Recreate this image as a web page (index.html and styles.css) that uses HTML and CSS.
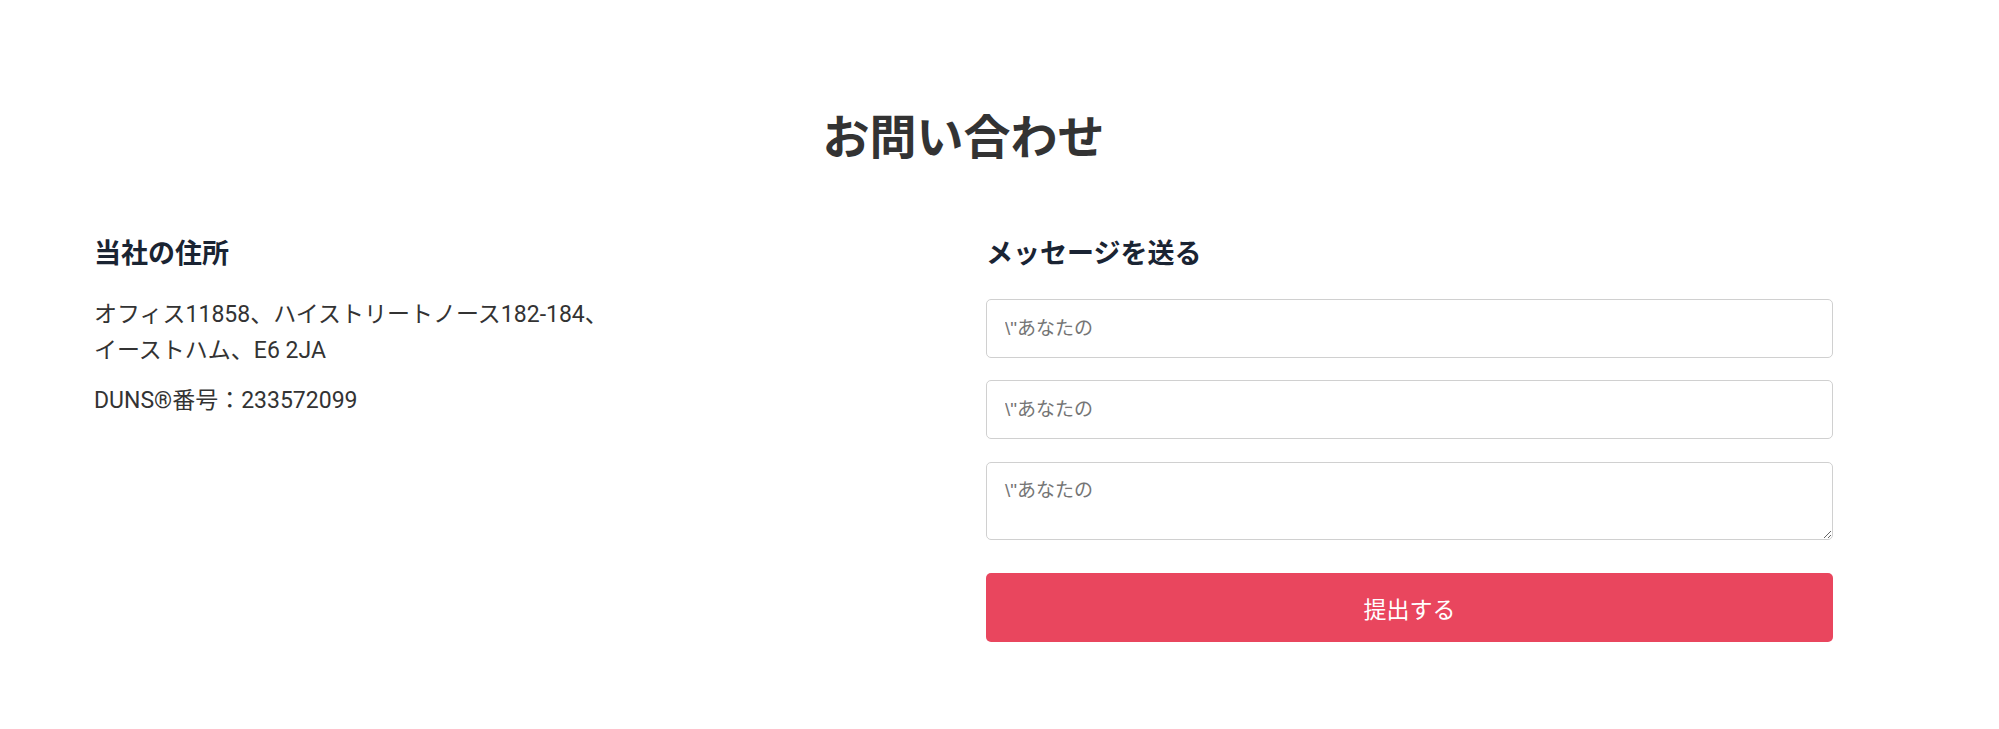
FILE: index.html
```html
<!DOCTYPE html>
<html lang="ja">
<head>
    <meta charset="UTF-8">
    <title>お問い合わせ</title>
    <link rel="stylesheet" href="styles.css">
</head>
<body>
    <section class="contact">
        <h1 class="contact-title">お問い合わせ</h1>

        <div class="contact-row">
            <!-- 住所 -->
            <div class="contact-col">
                <h3 class="col-title">当社の住所</h3>
                <p class="address">オフィス11858、ハイストリートノース182-184、<br>イーストハム、E6 2JA</p>
                <p class="duns">DUNS®番号：233572099</p>
            </div>

            <!-- フォーム -->
            <div class="contact-col">
                <h3 class="col-title">メッセージを送る</h3>
                <form class="contact-form" onsubmit="return false">
                    <input class="field" type="text" placeholder='\"あなたの'>
                    <input class="field" type="email" placeholder='\"あなたの'>
                    <textarea class="field field-area" placeholder='\"あなたの'></textarea>
                    <button class="submit-btn" type="submit">提出する</button>
                </form>
            </div>
        </div>
    </section>
</body>
</html>
```

FILE: styles.css
```css
body {
    margin: 0;
    background: #fff;
    color: #333;
    font-family: Roboto, "Noto Sans CJK JP", sans-serif;
}

.contact {
    width: 1739px;
    padding: 111px 0 0 94px;
}

.contact-title {
    margin: 0 0 73px;
    font-size: 47px;
    line-height: 54px;
    font-weight: 700;
    text-align: center;
    color: #333;
}

.contact-row {
    display: grid;
    grid-template-columns: 847px 847px;
    column-gap: 45px;
}

.col-title {
    margin: 0;
    font-size: 27px;
    line-height: 32px;
    font-weight: 700;
    color: #1a2433;
}

.address {
    margin: 27px 0 0;
    font-size: 23px;
    line-height: 36px;
}

.duns {
    margin: 14px 0 0;
    font-size: 23px;
    line-height: 36px;
}

.contact-form {
    display: flex;
    flex-direction: column;
    margin-top: 29px;
}

.field {
    box-sizing: border-box;
    width: 100%;
    height: 59px;
    margin-bottom: 22px;
    padding: 0 18px;
    border: 1px solid #d0d0d0;
    border-radius: 5px;
    font-family: "Liberation Sans", "Noto Sans CJK JP", sans-serif;
    font-size: 19px;
    color: #333;
    outline: none;
}

.field::placeholder {
    color: #757575;
}

.field-area {
    height: 78px;
    margin-top: 1px;
    margin-bottom: 33px;
    padding: 12px 18px;
    resize: vertical;
}

.submit-btn {
    height: 69px;
    border: none;
    border-radius: 5px;
    background-color: #e9465e;
    color: #fff;
    font-family: Roboto, "Noto Sans CJK JP", sans-serif;
    font-size: 23px;
    cursor: pointer;
}
```
